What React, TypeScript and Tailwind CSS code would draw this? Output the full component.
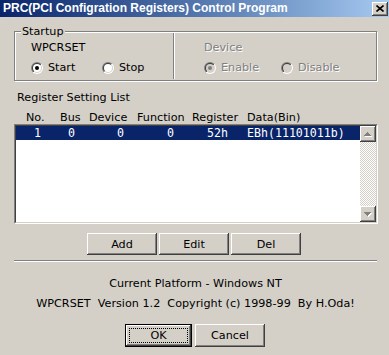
import React from "react";

const raised =
  "bg-[#d4d0c8] shadow-[inset_-1px_-1px_0_#404040,inset_1px_1px_0_#fff,inset_-2px_-2px_0_#808080,inset_2px_2px_0_#d4d0c8]";

function Radio({ checked, disabled }: { checked?: boolean; disabled?: boolean }) {
  return (
    <svg width="12" height="12" viewBox="0 0 12 12" className="shrink-0">
      <defs>
        <linearGradient id="rgo" x1="0" y1="0" x2="1" y2="1">
          <stop offset="0.5" stopColor="#808080" />
          <stop offset="0.5" stopColor="#ffffff" />
        </linearGradient>
        <linearGradient id="rgi" x1="0" y1="0" x2="1" y2="1">
          <stop offset="0.5" stopColor="#404040" />
          <stop offset="0.5" stopColor="#d4d0c8" />
        </linearGradient>
      </defs>
      <circle cx="6" cy="6" r="6" fill="url(#rgo)" />
      <circle cx="6" cy="6" r="5" fill="url(#rgi)" />
      <circle cx="6" cy="6" r="4" fill={disabled ? "#d4d0c8" : "#ffffff"} />
      {checked && <circle cx="6" cy="6" r="2" fill={disabled ? "#808080" : "#000000"} />}
    </svg>
  );
}

function Arrow({ down }: { down?: boolean }) {
  const d = down ? "M0 0h7v1h-1v1h-1v1h-1v1h-1v-1h-1v-1h-1v-1h-1z" : "M3 0h1v1h1v1h1v1h1v1H0V3h1V2h1V1h1z";
  return (
    <svg width="8" height="5" viewBox="0 0 8 5" shapeRendering="crispEdges">
      <path d={d} fill="#ffffff" transform="translate(1 1)" />
      <path d={d} fill="#808080" />
    </svg>
  );
}

export default function App() {
  return (
    <div className="w-[389px] h-[355px] bg-[#d4d0c8] overflow-hidden flex flex-col font-['DejaVu_Sans',sans-serif] text-[11.2px] leading-[13px] text-black">
      {/* Title bar */}
      <div className="h-[17px] shrink-0 flex items-center justify-between bg-linear-to-r from-[#0a246a] to-[#a6caf0] pl-[3px]">
        <span className="text-white font-bold font-['Liberation_Sans',Arial,sans-serif] text-[12px] leading-[17px] whitespace-nowrap">
          PRC(PCI Configration Registers) Control Program
        </span>
        <div className={raised + " w-[16px] h-[14px] mr-[1px] flex items-center justify-center"}>
          <svg width="8" height="7" viewBox="0 0 8 7">
            <path d="M0.5 0.5L7.5 6.5M7.5 0.5L0.5 6.5" stroke="#000" strokeWidth="1.6" />
          </svg>
        </div>
      </div>

      <div className="flex flex-col pl-[14px] pr-[12px]">
        {/* Startup group */}
        <div className="relative mt-[14px] h-[50px] flex border border-[#808080] shadow-[inset_1px_1px_0_#fff,1px_1px_0_#fff]">
          <span className="absolute left-[6px] top-[-7px] px-[1px] bg-[#d4d0c8]">Startup</span>
          <div className="w-[158px] pl-[16px] pt-[9px] flex flex-col">
            <span>WPCRSET</span>
            <div className="mt-[7px] flex items-center h-[13px]">
              <div className="w-[71px] flex items-center">
                <Radio checked />
                <span className="ml-[5px]">Start</span>
              </div>
              <div className="flex items-center">
                <Radio />
                <span className="ml-[5px]">Stop</span>
              </div>
            </div>
          </div>
          <div className="w-[2px] my-[1px] border-l border-l-[#808080] border-r border-r-white" />
          <div className="flex-1 pl-[29px] pt-[9px] flex flex-col text-[#808080] [text-shadow:1px_1px_0_#fff]">
            <span>Device</span>
            <div className="mt-[7px] flex items-center h-[13px]">
              <div className="w-[77px] flex items-center">
                <Radio checked disabled />
                <span className="ml-[5px]">Enable</span>
              </div>
              <div className="flex items-center">
                <Radio disabled />
                <span className="ml-[5px]">Disable</span>
              </div>
            </div>
          </div>
        </div>

        {/* Register list */}
        <span className="mt-[10px] ml-[3px]">Register Setting List</span>
        <div className="mt-[7px] flex h-[13px]">
          <span className="w-[12px]" />
          <span className="w-[34px]">No.</span>
          <span className="w-[29px]">Bus</span>
          <span className="w-[48px]">Device</span>
          <span className="w-[55px]">Function</span>
          <span className="w-[55px]">Register</span>
          <span>Data(Bin)</span>
        </div>
        <div className="w-[364px] h-[100px] border border-t-[#808080] border-l-[#808080] border-b-white border-r-white">
          <div className="h-full border border-t-[#404040] border-l-[#404040] border-b-[#d4d0c8] border-r-[#d4d0c8] bg-white flex">
            <div className="flex-1">
              <div className="h-[14px] bg-[#0a246a] text-white flex items-center font-['DejaVu_Sans_Mono',monospace] text-[11.6px] leading-[14px] whitespace-pre">
                <span className="w-[18px]" />
                <span className="w-[34px]">1</span>
                <span className="w-[49px]">0</span>
                <span className="w-[50px]">0</span>
                <span className="w-[40px]">0</span>
                <span className="w-[40px]">52h</span>
                <span>EBh(11101011b)</span>
              </div>
            </div>
            <div className="w-[16px] flex flex-col">
              <div className={raised + " h-[16px] flex items-center justify-center"}>
                <Arrow />
              </div>
              <div className="flex-1 bg-[repeating-conic-gradient(#ffffff_0%_25%,#d4d0c8_0%_50%)] bg-[length:2px_2px]" />
              <div className={raised + " h-[16px] flex items-center justify-center"}>
                <Arrow down />
              </div>
            </div>
          </div>
        </div>

        {/* Add / Edit / Del */}
        <div className="mt-[9px] ml-[73px] flex gap-[2px]">
          <div className={raised + " w-[70px] h-[22px] flex items-center justify-center"}>Add</div>
          <div className={raised + " w-[70px] h-[22px] flex items-center justify-center"}>Edit</div>
          <div className={raised + " w-[70px] h-[22px] flex items-center justify-center"}>Del</div>
        </div>

        <div className="mt-[5px] h-[2px] border-t border-t-[#808080] border-b border-b-white" />

        <span className="mt-[15px] text-center">Current Platform - Windows NT</span>
        <span className="mt-[7px] text-center whitespace-pre">WPCRSET  Version 1.2  Copyright (c) 1998-99  By H.Oda!</span>

        <div className="mt-[14px] ml-[111px] flex gap-[3px]">
          <div className="w-[67px] h-[23px] border border-black">
            <div className={raised + " relative h-full flex items-center justify-center"}>
              OK
              <div className="absolute inset-[3px] border border-dotted border-black" />
            </div>
          </div>
          <div className={raised + " w-[70px] h-[23px] flex items-center justify-center"}>Cancel</div>
        </div>
      </div>
    </div>
  );
}
